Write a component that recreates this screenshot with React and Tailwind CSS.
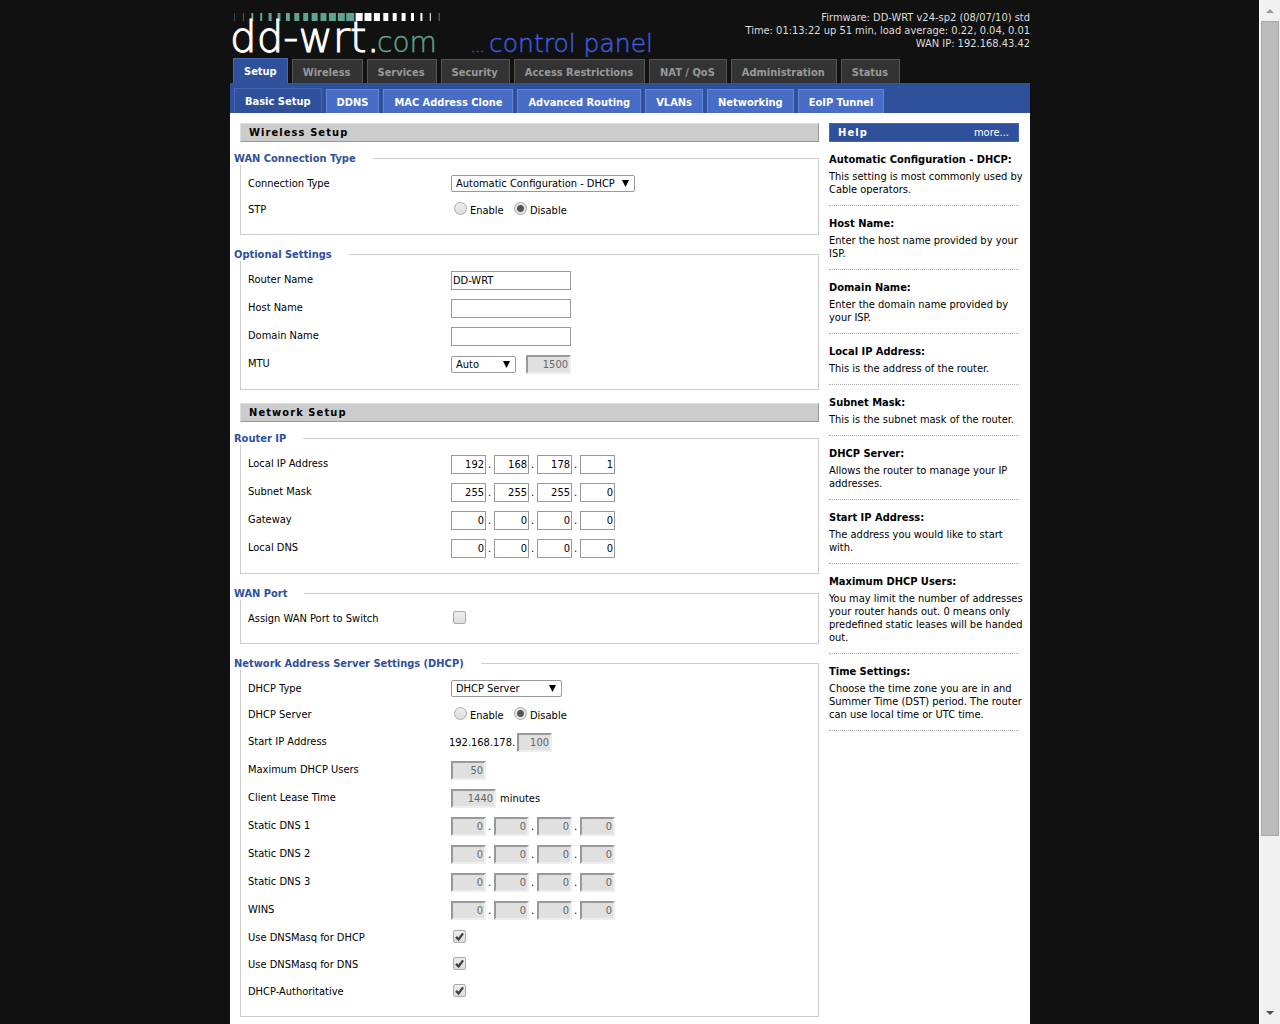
import clsx from 'clsx';

const mainMenu = ['Setup', 'Wireless', 'Services', 'Security', 'Access Restrictions', 'NAT / QoS', 'Administration', 'Status'];
const subMenu = ['Basic Setup', 'DDNS', 'MAC Address Clone', 'Advanced Routing', 'VLANs', 'Networking', 'EoIP Tunnel'];

const routerIp = [
    { label: 'Local IP Address', id: 'lan_ip', value: [192, 168, 178, 1] },
    { label: 'Subnet Mask', id: 'lan_mask', value: [255, 255, 255, 0] },
    { label: 'Gateway', id: 'lan_gw', value: [0, 0, 0, 0] },
    { label: 'Local DNS', id: 'lan_dns', value: [0, 0, 0, 0] },
];

const helpItems = [
    { title: 'Automatic Configuration - DHCP:', lines: ['This setting is most commonly used by', 'Cable operators.'] },
    { title: 'Host Name:', lines: ['Enter the host name provided by your', 'ISP.'] },
    { title: 'Domain Name:', lines: ['Enter the domain name provided by', 'your ISP.'] },
    { title: 'Local IP Address:', lines: ['This is the address of the router.'] },
    { title: 'Subnet Mask:', lines: ['This is the subnet mask of the router.'] },
    { title: 'DHCP Server:', lines: ['Allows the router to manage your IP', 'addresses.'] },
    { title: 'Start IP Address:', lines: ['The address you would like to start', 'with.'] },
    {
        title: 'Maximum DHCP Users:',
        lines: [
            'You may limit the number of addresses',
            'your router hands out. 0 means only',
            'predefined static leases will be handed',
            'out.',
        ],
    },
    {
        title: 'Time Settings:',
        lines: ['Choose the time zone you are in and', 'Summer Time (DST) period. The router', 'can use local time or UTC time.'],
    },
];

const logoBars = [1, 1, 2, 2, 3, 3, 4, 5, 5, 6, 6, 7, 7, 8, 7, 7, 6, 5, 4, 4, 3, 2, 1, 1];

function Logo() {
    return (
        <svg
            width="430"
            height="58"
            viewBox="0 0 430 58"
            className="overflow-visible"
            fontFamily="'DejaVu Sans Light', 'DejaVu Sans', sans-serif"
            role="img"
            aria-label="dd-wrt.com control panel"
        >
            {logoBars.map((w, i) => (
                <rect
                    key={i}
                    x={2.5 + i * 8.9 - w / 2}
                    y="13"
                    width={w}
                    height="8"
                    fill={i < 14 ? '#5da493' : '#fff'}
                    opacity={i === 0 || i === 23 ? 0.4 : i === 1 ? 0.6 : 1}
                />
            ))}
            <text x="-2" y="52" fill="#fff" stroke="#fff" fontSize="42">
                dd-wrt.
            </text>
            <text x="145" y="52" fill="#5da493" stroke="#5da493" strokeWidth="0.4" fontSize="28">
                com
            </text>
            <text x="239" y="52" fill="#3d5ee0" stroke="#3d5ee0" strokeWidth="0.6" fontSize="14">
                ...
            </text>
            <text x="257" y="52" fill="#3d5ee0" stroke="#3d5ee0" strokeWidth="0.4" fontSize="25">
                control panel
            </text>
        </svg>
    );
}

function SectionTitle({ children }) {
    return (
        <h2 className="h-[19px] border border-t-[#ddd] border-r-[#999] border-b-[#999] border-l-[#ddd] bg-[#ccc] pl-2 leading-[17px] font-bold tracking-widest">
            {children}
        </h2>
    );
}

function Group({ legend, children }) {
    return (
        <fieldset className="min-w-0 border border-[#ccc] px-[7px] pb-[11px]">
            <legend className="-ml-[14px] bg-white pr-[17px] leading-[13px] font-bold text-[#2f519c]">{legend}</legend>
            <div className="pt-[5px]">{children}</div>
        </fieldset>
    );
}

function Row({ label, htmlFor, className = 'h-7', children }) {
    return (
        <div className={clsx('flex items-start', className)}>
            <label htmlFor={htmlFor} className="w-[203px] shrink-0 pt-[7px]">
                {label}
            </label>
            <div className="flex items-center pt-[5px]">{children}</div>
        </div>
    );
}

function TextBox({ className, ...props }) {
    return (
        <input
            type="text"
            className={clsx(
                'h-[19px] border border-[#999] bg-white px-px leading-[13px] text-black outline-none',
                'disabled:border-2 disabled:border-t-[#999] disabled:border-r-[#eee] disabled:border-b-[#eee] disabled:border-l-[#999] disabled:bg-[#e0e0e0] disabled:text-[#666]',
                className,
            )}
            {...props}
        />
    );
}

function Dropdown({ id, className, options }) {
    return (
        <div className={clsx('relative', className)}>
            <select
                id={id}
                className="block h-[17px] w-full appearance-none rounded-xs border border-[#999] bg-white pl-1 leading-[15px] outline-none"
            >
                {options.map((option) => (
                    <option key={option}>{option}</option>
                ))}
            </select>
            <svg className="pointer-events-none absolute top-[5px] right-[6px]" width="7" height="7" viewBox="0 0 7 7">
                <path d="M0 0h7L3.5 7z" fill="#000" />
            </svg>
        </div>
    );
}

function EnableDisable({ name }) {
    return (
        <div className="flex pt-px pl-[3px]">
            {['Enable', 'Disable'].map((option) => (
                <label key={option} className="flex items-start">
                    <input
                        type="radio"
                        name={name}
                        defaultChecked={option === 'Disable'}
                        className="size-[13px] appearance-none rounded-full border border-[#aaa] bg-linear-to-b from-[#eee] to-[#ddd] checked:bg-[radial-gradient(circle,#555_3px,#e4e4e4_4px)]"
                    />
                    <span className="w-[47px] pt-0.5 pl-[3px]">{option}</span>
                </label>
            ))}
        </div>
    );
}

function Tick({ id, defaultChecked }) {
    return (
        <div className="grid pt-px pl-0.5">
            <input
                id={id}
                type="checkbox"
                defaultChecked={defaultChecked}
                className="peer col-start-1 row-start-1 size-[13px] appearance-none rounded-xs border border-[#aaa] bg-linear-to-b from-[#eee] to-[#ddd]"
            />
            <svg
                className="pointer-events-none invisible col-start-1 row-start-1 peer-checked:visible"
                width="13"
                height="13"
                viewBox="0 0 13 13"
            >
                <path d="M3 6.8l2.6 2.6L10 3.4" fill="none" stroke="#444" strokeWidth="2.4" />
            </svg>
        </div>
    );
}

function IpInput({ id, label, value, disabled }) {
    return value.map((part, i) => (
        <div key={i} className="flex items-center">
            {i > 0 && <span className="w-2 pl-0.5">.</span>}
            <TextBox
                id={i === 0 ? id : `${id}_${i}`}
                aria-label={`${label} ${i + 1}`}
                defaultValue={part}
                disabled={disabled}
                className="w-[35px] text-right"
            />
        </div>
    ));
}

function MenuBar({ items, sub }) {
    return (
        <ul className="flex items-end gap-1">
            {items.map((item, i) => (
                <li key={item}>
                    <a
                        href="#"
                        className={clsx(
                            'block border border-b-0 pl-[10px] font-bold whitespace-nowrap',
                            i === 0 && 'h-[25px] border-[#4468b4] bg-[#2f519c] pr-[10px] leading-[25px] text-white',
                            i > 0 && 'h-6 leading-[25px]',
                            i > 0 &&
                                (sub
                                    ? 'border-[#6486d8] bg-[#486dc6] pr-[10px] text-white'
                                    : 'border-[#555] bg-[#333] pr-[11px] text-[#999]'),
                        )}
                    >
                        {item}
                    </a>
                </li>
            ))}
        </ul>
    );
}

function Help() {
    return (
        <aside className="w-[190px] shrink-0">
            <div className="flex h-[19px] items-center justify-between border border-[#4468b4] bg-[#2f519c] pr-[9px] pl-2 text-white">
                <h2 className="font-bold tracking-widest">Help</h2>
                <a href="#">more...</a>
            </div>
            <dl className="pt-[11px]">
                {helpItems.map((item) => (
                    <div key={item.title} className="mb-[11px] border-b border-dotted border-[#aaa] pb-[9px]">
                        <dt className="mb-1 font-bold whitespace-nowrap">{item.title}</dt>
                        {item.lines.map((line) => (
                            <dd key={line} className="whitespace-nowrap">
                                {line}
                            </dd>
                        ))}
                    </div>
                ))}
            </dl>
        </aside>
    );
}

function ScrollBar() {
    return (
        <div className="flex w-[21px] shrink-0 flex-col items-center border-l border-white bg-[#f1f1f1]" aria-hidden="true">
            <svg width="20" height="21" viewBox="0 0 20 21">
                <path d="M6 13h8l-4-4z" fill="#999" />
            </svg>
            <div className="w-full flex-1 px-px">
                <div className="h-[83%] border border-[#a8a8a8] bg-[#bcbcbc]" />
            </div>
            <svg width="20" height="21" viewBox="0 0 20 21">
                <path d="M6 8h8l-4 4z" fill="#505050" />
            </svg>
        </div>
    );
}

export default function App() {
    return (
        <div className="flex min-h-screen bg-[#111] font-['DejaVu_Sans_Condensed','DejaVu_Sans',sans-serif] text-[11px] leading-[13px] text-black">
            <div className="flex flex-1 justify-center pl-px">
                <div className="flex w-full max-w-[800px] flex-col">
                    <header>
                        <div className="flex h-[58px] justify-between pl-0.5">
                            <Logo />
                            <div className="pt-[11px] text-right text-[#ddd]">
                                <p>Firmware: DD-WRT v24-sp2 (08/07/10) std</p>
                                <p>Time: 01:13:22 up 51 min, load average: 0.22, 0.04, 0.01</p>
                                <p>WAN IP: 192.168.43.42</p>
                            </div>
                        </div>
                        <nav>
                            <div className="pl-[3px]">
                                <MenuBar items={mainMenu} />
                            </div>
                            <div className="bg-[#2f519c] pt-[5px] pl-1">
                                <MenuBar items={subMenu} sub />
                            </div>
                        </nav>
                    </header>

                    <div className="flex flex-1 gap-[10px] bg-white pt-[10px] pr-[11px] pl-[10px]">
                        <form className="min-w-0 flex-1">
                            {/* Wireless */}
                            <SectionTitle>Wireless Setup</SectionTitle>
                            <div className="mt-[10px] mb-[13px] flex flex-col gap-[13px]">
                                <Group legend="WAN Connection Type">
                                    <Row label="Connection Type" htmlFor="wan_proto" className="h-[26px]">
                                        <Dropdown
                                            id="wan_proto"
                                            className="w-[184px]"
                                            options={['Automatic Configuration - DHCP', 'Static IP', 'PPPoE', 'Disabled']}
                                        />
                                    </Row>
                                    <Row label="STP" className="h-[27px]">
                                        <EnableDisable name="lan_stp" />
                                    </Row>
                                </Group>
                                <Group legend="Optional Settings">
                                    <Row label="Router Name" htmlFor="router_name">
                                        <TextBox id="router_name" defaultValue="DD-WRT" className="w-[120px]" />
                                    </Row>
                                    <Row label="Host Name" htmlFor="wan_hostname">
                                        <TextBox id="wan_hostname" className="w-[120px]" />
                                    </Row>
                                    <Row label="Domain Name" htmlFor="wan_domain">
                                        <TextBox id="wan_domain" className="w-[120px]" />
                                    </Row>
                                    <Row label="MTU" htmlFor="mtu_enable">
                                        <Dropdown id="mtu_enable" className="mr-[10px] w-[65px]" options={['Auto', 'Manual']} />
                                        <TextBox aria-label="MTU size" defaultValue="1500" disabled className="w-[45px] text-right" />
                                    </Row>
                                </Group>
                            </div>

                            {/* Network */}
                            <SectionTitle>Network Setup</SectionTitle>
                            <div className="mt-[10px] flex flex-col gap-[13px]">
                                <Group legend="Router IP">
                                    {routerIp.map((row) => (
                                        <Row key={row.id} label={row.label} htmlFor={row.id}>
                                            <IpInput {...row} />
                                        </Row>
                                    ))}
                                </Group>
                                <Group legend="WAN Port">
                                    <Row label="Assign WAN Port to Switch" htmlFor="fullswitch" className="h-[27px]">
                                        <Tick id="fullswitch" />
                                    </Row>
                                </Group>
                                <Group legend="Network Address Server Settings (DHCP)">
                                    <Row label="DHCP Type" htmlFor="dhcp_type" className="h-[26px]">
                                        <Dropdown id="dhcp_type" className="w-[111px]" options={['DHCP Server', 'DHCP Forwarder']} />
                                    </Row>
                                    <Row label="DHCP Server" className="h-[27px]">
                                        <EnableDisable name="dhcp_server" />
                                    </Row>
                                    <Row label="Start IP Address" htmlFor="dhcp_start">
                                        <span className="-ml-0.5 w-[68px]">192.168.178.</span>
                                        <TextBox id="dhcp_start" defaultValue="100" disabled className="w-[35px] text-right" />
                                    </Row>
                                    <Row label="Maximum DHCP Users" htmlFor="dhcp_num">
                                        <TextBox id="dhcp_num" defaultValue="50" disabled className="w-[35px] text-right" />
                                    </Row>
                                    <Row label="Client Lease Time" htmlFor="dhcp_lease">
                                        <TextBox id="dhcp_lease" defaultValue="1440" disabled className="w-[45px] text-right" />
                                        <span className="pl-1">minutes</span>
                                    </Row>
                                    {['Static DNS 1', 'Static DNS 2', 'Static DNS 3', 'WINS'].map((label, i) => (
                                        <Row key={label} label={label} htmlFor={`wan_dns${i}`}>
                                            <IpInput id={`wan_dns${i}`} label={label} value={[0, 0, 0, 0]} disabled />
                                        </Row>
                                    ))}
                                    {['Use DNSMasq for DHCP', 'Use DNSMasq for DNS', 'DHCP-Authoritative'].map((label, i) => (
                                        <Row key={label} label={label} htmlFor={`dnsmasq${i}`} className="h-[27px]">
                                            <Tick id={`dnsmasq${i}`} defaultChecked />
                                        </Row>
                                    ))}
                                </Group>
                            </div>
                        </form>
                        <Help />
                    </div>
                </div>
            </div>
            <ScrollBar />
        </div>
    );
}
